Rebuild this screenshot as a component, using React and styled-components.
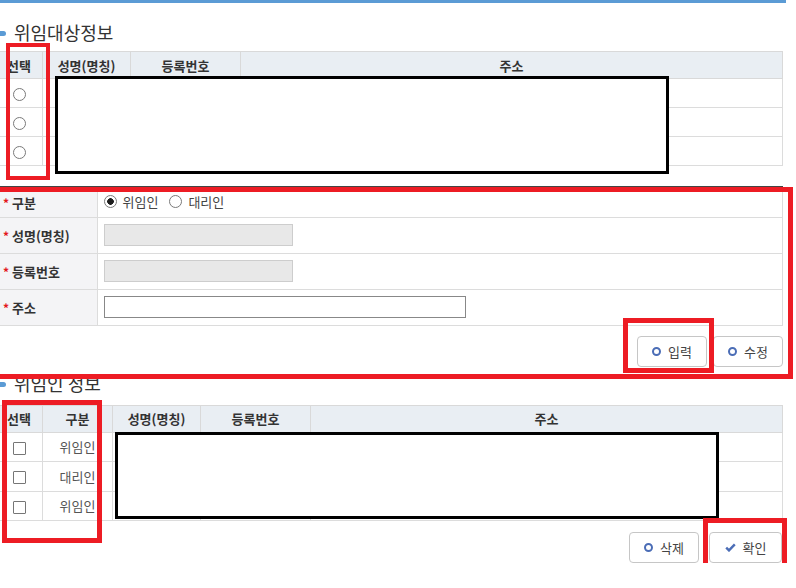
import React from 'react';
import styled, { createGlobalStyle } from 'styled-components';

const GlobalStyle = createGlobalStyle`
  html, body { margin: 0; padding: 0; background: #fff; overflow: hidden; }
  body { font-family: "Noto Sans CJK KR", "Noto Sans", sans-serif; color: #333; }
  * { box-sizing: border-box; }
`;

const Page = styled.div`
  position: relative;
  width: 788px;
  margin-left: -5px;
`;

const TopBar = styled.div`
  height: 3px;
  width: 791px;
  background: #5b9bd5;
`;

const SectionTitle = styled.h2`
  position: relative;
  margin: ${p => p.$mt}px 0 ${p => p.$mb}px;
  height: 26px;
  line-height: 26px;
  padding-left: 19px;
  font-size: 18px;
  font-weight: 400;
  color: #333;
  &::before {
    content: '';
    position: absolute;
    left: 0;
    top: 12px;
    width: 11px;
    height: 5px;
    border-radius: 3px;
    background: #5b9bd5;
  }
`;

const Grid = styled.table`
  width: 100%;
  border-collapse: collapse;
  table-layout: fixed;
  font-size: 13px;
`;

const Head = styled.th`
  height: ${p => p.$h || 27}px;
  padding: 0;
  background: #e9eef3;
  border: 1px solid #d9d9d9;
  font-weight: 700;
  color: #333;
  text-align: center;
`;

const Cell = styled.td`
  height: ${p => p.$h || 29}px;
  padding: 0;
  border: 1px solid #dcdcdc;
  color: #555;
  text-align: center;
  vertical-align: middle;
`;

const Radio = styled.input.attrs({ type: 'radio' })`
  appearance: none;
  margin: 0 ${p => p.$mr || 0}px 0 0;
  width: 13px;
  height: 13px;
  border: 1px solid #7a7a7a;
  border-radius: 50%;
  background: #fff;
  vertical-align: middle;
  &:checked {
    background: radial-gradient(circle, #1e1e1e 0 3px, #fff 3.6px);
  }
`;

const Check = styled.input.attrs({ type: 'checkbox' })`
  appearance: none;
  margin: 0;
  width: 13px;
  height: 13px;
  border: 1px solid #767676;
  border-radius: 1px;
  background: #fff;
  vertical-align: middle;
`;

const FormTable = styled.table`
  width: 100%;
  margin-top: 20px;
  border-collapse: collapse;
  table-layout: fixed;
  border-top: 2px solid #444;
  border-bottom: 1px solid #555;
  font-size: 13px;
`;

const FormLabel = styled.th`
  height: ${p => p.$h}px;
  padding: 0 0 0 8px;
  background: #f4f4f6;
  border-bottom: 1px solid #dcdcdc;
  border-right: 1px solid #dcdcdc;
  text-align: left;
  font-weight: 700;
  color: #333;
`;

const Req = styled.span`
  display: inline-block;
  width: 9px;
  color: #e3161c;
  font-size: 12px;
  font-weight: 700;
`;

const FormValue = styled.td`
  padding: 0 0 0 6px;
  border-bottom: 1px solid #dcdcdc;
  border-right: 1px solid #dcdcdc;
  color: #444;
`;

const ChoiceLabel = styled.label`
  display: inline-flex;
  align-items: center;
  margin-right: 11px;
  gap: 6px;
  color: #444;
`;

const TextBox = styled.input.attrs({ type: 'text' })`
  display: block;
  width: ${p => p.$w}px;
  height: 22px;
  margin: 0;
  padding: 0 4px;
  border: 1px solid ${p => (p.disabled ? '#cdcdcd' : '#888')};
  background: ${p => (p.disabled ? '#e8e8e8' : '#fff')};
  font-size: 13px;
`;

const ButtonRow = styled.div`
  display: flex;
  justify-content: flex-end;
  gap: ${p => p.$gap}px;
  margin-top: ${p => p.$mt}px;
  padding-right: ${p => p.$pr || 0}px;
`;

const Button = styled.button`
  display: inline-flex;
  align-items: center;
  justify-content: center;
  gap: 7px;
  width: ${p => p.$w || 70}px;
  height: 31px;
  padding: 0;
  border: 1px solid #c6c6c6;
  border-radius: 4px;
  background: #fff;
  font-family: "Noto Sans CJK KR", "Noto Sans", sans-serif;
  font-size: 13px;
  color: #444;
`;

const Ring = styled.span`
  width: 9px;
  height: 9px;
  border: 2.6px solid #4b6db6;
  border-radius: 50%;
`;

const Mark = styled.div`
  position: absolute;
  pointer-events: none;
  left: ${p => p.$x + 5}px;
  top: ${p => p.$y}px;
  width: ${p => p.$w}px;
  height: ${p => p.$h}px;
  border: ${p => p.$t}px solid ${p => p.$c};
  background: ${p => p.$fill || 'transparent'};
`;

const CheckIcon = () => (
  <svg width="11" height="9" viewBox="0 0 11 9">
    <polyline points="1.2,4.6 4,7.4 9.8,1.4" fill="none" stroke="#4b6db6" strokeWidth="2.4" />
  </svg>
);

const targets = [0, 1, 2];
const delegates = ['위임인', '대리인', '위임인'];

export default function App() {
  return (
    <>
      <GlobalStyle />
      <Page>
        <TopBar />
        <SectionTitle $mt={16} $mb={6}>위임대상정보</SectionTitle>
        <Grid>
          <colgroup>
            <col style={{ width: 47 }} />
            <col style={{ width: 88 }} />
            <col style={{ width: 110 }} />
            <col />
          </colgroup>
          <thead>
            <tr>
              <Head>선택</Head>
              <Head>성명(명칭)</Head>
              <Head>등록번호</Head>
              <Head>주소</Head>
            </tr>
          </thead>
          <tbody>
            {targets.map(i => (
              <tr key={i}>
                <Cell><Radio name="target" /></Cell>
                <Cell />
                <Cell />
                <Cell />
              </tr>
            ))}
          </tbody>
        </Grid>

        <FormTable>
          <colgroup>
            <col style={{ width: 102 }} />
            <col />
          </colgroup>
          <tbody>
            <tr>
              <FormLabel $h={30}><Req>*</Req>구분</FormLabel>
              <FormValue>
                <ChoiceLabel><Radio name="kind" defaultChecked />위임인</ChoiceLabel>
                <ChoiceLabel><Radio name="kind" />대리인</ChoiceLabel>
              </FormValue>
            </tr>
            <tr>
              <FormLabel $h={36}><Req>*</Req>성명(명칭)</FormLabel>
              <FormValue><TextBox $w={189} disabled /></FormValue>
            </tr>
            <tr>
              <FormLabel $h={36}><Req>*</Req>등록번호</FormLabel>
              <FormValue><TextBox $w={189} disabled /></FormValue>
            </tr>
            <tr>
              <FormLabel $h={36}><Req>*</Req>주소</FormLabel>
              <FormValue><TextBox $w={362} /></FormValue>
            </tr>
          </tbody>
        </FormTable>

        <ButtonRow $gap={6} $mt={10}>
          <Button><Ring />입력</Button>
          <Button><Ring />수정</Button>
        </ButtonRow>

        <SectionTitle $mt={3} $mb={9}>위임인 정보</SectionTitle>
        <Grid>
          <colgroup>
            <col style={{ width: 47 }} />
            <col style={{ width: 70 }} />
            <col style={{ width: 88 }} />
            <col style={{ width: 110 }} />
            <col />
          </colgroup>
          <thead>
            <tr>
              <Head>선택</Head>
              <Head>구분</Head>
              <Head>성명(명칭)</Head>
              <Head>등록번호</Head>
              <Head>주소</Head>
            </tr>
          </thead>
          <tbody>
            {delegates.map((d, i) => (
              <tr key={i}>
                <Cell $h={i === 1 ? 30 : 29}><Check /></Cell>
                <Cell>{d}</Cell>
                <Cell />
                <Cell />
                <Cell />
              </tr>
            ))}
          </tbody>
        </Grid>

        <ButtonRow $gap={10} $mt={11} $pr={1}>
          <Button><Ring />삭제</Button>
          <Button $w={73}><CheckIcon />확인</Button>
        </ButtonRow>

        <Mark $x={55} $y={76} $w={614} $h={98} $t={3} $c="#000" $fill="#fff" />
        <Mark $x={115} $y={432} $w={604} $h={87} $t={3} $c="#000" $fill="#fff" />
        <Mark $x={6} $y={43} $w={44} $h={137} $t={4} $c="#ed1c24" />
        <Mark $x={-10} $y={187} $w={803} $h={192} $t={5} $c="#ed1c24" />
        <Mark $x={623} $y={318} $w={91} $h={55} $t={5} $c="#ed1c24" />
        <Mark $x={2} $y={400} $w={100} $h={143} $t={5} $c="#ed1c24" />
        <Mark $x={703} $y={518} $w={84} $h={55} $t={5} $c="#ed1c24" />
      </Page>
    </>
  );
}
